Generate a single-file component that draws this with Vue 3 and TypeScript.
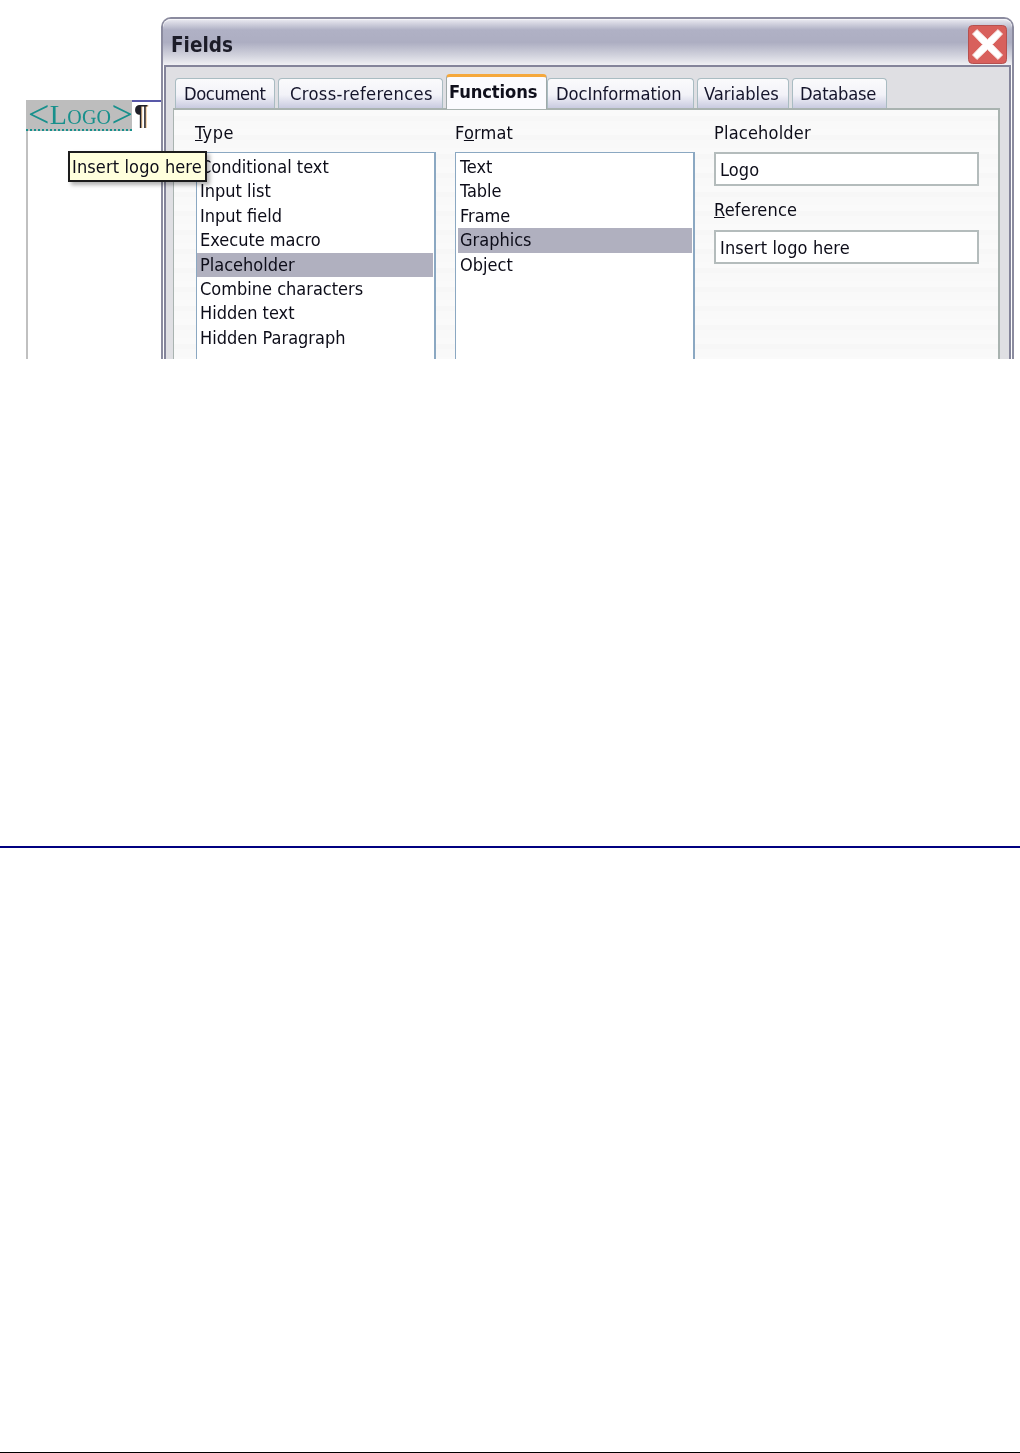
<script setup lang="ts">
interface Tab {
  name: string
  width: number
  pad: number
  spacing: number
}
const tabs: Tab[] = [
  { name: 'Document', width: 100, pad: 8, spacing: -0.4 },
  { name: 'Cross-references', width: 165, pad: 11, spacing: 0.35 },
  { name: 'Functions', width: 101, pad: 2, spacing: -0.1 },
  { name: 'DocInformation', width: 147, pad: 8, spacing: -0.05 },
  { name: 'Variables', width: 92, pad: 6, spacing: 0.02 },
  { name: 'Database', width: 95, pad: 7, spacing: -0.25 },
]
const types = ['Conditional text', 'Input list', 'Input field', 'Execute macro', 'Placeholder', 'Combine characters', 'Hidden text', 'Hidden Paragraph']
const formats = ['Text', 'Table', 'Frame', 'Graphics', 'Object']
</script>

<template>
  <div class="page">
    <div class="shot">
      <div class="doc">
        <div class="docline">
          <span class="logo"><span class="bracket">&lt;</span>Logo<span class="bracket">&gt;</span></span><span class="pil">¶</span>
        </div>
        <div class="docbody"></div>
      </div>

      <div class="dialog">
        <div class="titlebar">
          <span class="title">Fields</span>
          <svg class="close" width="39" height="39" viewBox="0 0 39 39">
            <rect x="0.5" y="0.5" width="38" height="38" rx="4" fill="#d8605c" stroke="#b5504f" />
            <path d="M4.5 9 L9 4.5 L19.5 14.5 L30 4.5 L34.5 9 L24.5 19.5 L34.5 30 L30 34.5 L19.5 24.5 L9 34.5 L4.5 30 L14.5 19.5 Z" fill="#fff" stroke="#f3d9d6" stroke-width="1" />
          </svg>
        </div>
        <div class="frame">
          <div class="tabs">
            <div
              v-for="t in tabs"
              :key="t.name"
              class="tab"
              :class="{ active: t.name === 'Functions' }"
              :style="{ width: t.width + 'px', paddingLeft: t.pad + 'px', letterSpacing: t.spacing + 'px' }"
            >{{ t.name }}</div>
          </div>
          <div class="panel">
            <div class="col">
              <div class="label first"><u>T</u>ype</div>
              <div class="list">
                <div v-for="t in types" :key="t" class="row" :class="{ sel: t === 'Placeholder' }">{{ t }}</div>
              </div>
            </div>
            <div class="col">
              <div class="label">F<u>o</u>rmat</div>
              <div class="list inset">
                <div v-for="f in formats" :key="f" class="row" :class="{ sel: f === 'Graphics' }">{{ f }}</div>
              </div>
            </div>
            <div class="col">
              <div class="label">Placeholder</div>
              <div class="input">Logo</div>
              <div class="label second"><u>R</u>eference</div>
              <div class="input">Insert logo here</div>
            </div>
          </div>
        </div>
      </div>

      <div class="tooltip">Insert logo here</div>
    </div>
    <div class="rule-blue"></div>
    <div class="rule-black"></div>
  </div>
</template>

<style scoped>
.page {
  height: 1453px;
  background: #fff;
  overflow: hidden;
  font-family: "DejaVu Sans Condensed", "DejaVu Sans", sans-serif;
  color: #0c0c18;
}
.shot {
  position: relative;
  height: 359px;
  overflow: hidden;
}
.doc {
  position: absolute;
  left: 26px;
  top: 100px;
  width: 135px;
  height: 270px;
  display: flex;
  flex-direction: column;
  filter: blur(0.35px);
}
.docline {
  display: flex;
  height: 31px;
  flex: none;
  background: linear-gradient(#5858a8, #5858a8) 106px 0 / 29px 2px no-repeat;
}
.logo {
  width: 106px;
  height: 31px;
  padding-left: 2px;
  box-sizing: border-box;
  background: #bdbdbd;
  color: #17908c;
  font-family: "Liberation Serif", serif;
  font-variant: small-caps;
  font-size: 28px;
  line-height: 29px;
  white-space: nowrap;
  border-bottom: 2px dotted #17908c;
  letter-spacing: 0.3px;
}
.bracket {
  font-size: 38px;
  line-height: 0;
  vertical-align: -3px;
}
.pil {
  margin-left: 2px;
  font-family: "Liberation Sans", sans-serif;
  font-size: 27px;
  line-height: 31px;
  color: #202028;
  text-shadow: 1px 0 0 rgba(230, 140, 40, 0.5);
}
.docbody {
  flex: 1;
  border-left: 2px solid #c0c0c0;
}
.dialog {
  position: absolute;
  left: 161px;
  top: 17px;
  width: 853px;
  height: 370px;
  box-sizing: border-box;
  border: 2px solid #8b8b9f;
  border-bottom: 0;
  border-radius: 10px 10px 0 0;
  background: #fff;
  display: flex;
  flex-direction: column;
  filter: blur(0.35px);
}
.titlebar {
  height: 46px;
  flex: none;
  display: flex;
  align-items: center;
  justify-content: space-between;
  box-sizing: border-box;
  padding: 5px 5px 0 8px;
  border-top: 1px solid #f4f4f8;
  border-radius: 8px 8px 0 0;
  background: linear-gradient(#e6e6ee 0, #b0b1c5 22%, #adaec2 50%, #d3d4de 80%, #f0f0f4 100%);
}
.title {
  font-size: 20.5px;
  font-weight: 700;
  color: #1c1c28;
  margin-top: -1px;
}
.close {
  display: block;
  margin-top: -1px;
}
.frame {
  flex: 1;
  margin: 0 1px;
  border: 2px solid #84849a;
  border-bottom: 0;
  background: #dfdfe3;
  padding: 9px 9px 0 7px;
  display: flex;
  flex-direction: column;
}
.tabs {
  display: flex;
  gap: 3px;
  height: 32px;
  align-items: flex-end;
  padding-left: 2px;
}
.tab {
  height: 30px;
  flex: none;
  box-sizing: border-box;
  padding-top: 3px;
  font-size: 18.2px;
  line-height: 24px;
  white-space: nowrap;
  color: #14142a;
  border: 1px solid #a9bcc2;
  border-bottom: 0;
  border-radius: 4px 4px 0 0;
  background: linear-gradient(#fafafc, #f2f2f8 55%, #c9cbe0);
}
.tab.active {
  height: 35px;
  margin: 0 -3px -1px 0;
  position: relative;
  z-index: 1;
  font-weight: 700;
  color: #10101c;
  background: #fbfbfe;
  border-color: #9fa9a9;
  border-top: 3px solid #f5a83c;
}
.panel {
  flex: 1;
  border: 1px solid #a9b3b0;
  border-width: 2px 2px 0 1px;
  padding: 11px 0 0 22px;
  display: grid;
  grid-template-columns: 240px 240px 265px;
  column-gap: 19px;
  background: repeating-linear-gradient(#fafafa 0 6px, #f7f7f7 6px 11px, #f9f9f9 11px 19px);
}
.col {
  display: flex;
  flex-direction: column;
}
.label {
  height: 31px;
  font-size: 18px;
  line-height: 24px;
  letter-spacing: 0.2px;
}
.label.first {
  margin-left: -1px;
  letter-spacing: 0.5px;
}
.label.second {
  margin-top: 12px;
  height: 32px;
}
.list {
  height: 300px;
  box-sizing: border-box;
  border: 1px solid #8ba8c2;
  border-width: 1px 2px 0 1px;
  background: #fff;
  padding: 2px 1px 0 0;
}
.list.inset {
  padding-left: 2px;
}
.row {
  height: 24.4px;
  padding-left: 3px;
  font-size: 18px;
  line-height: 24.4px;
  white-space: nowrap;
}
.list.inset .row {
  padding-left: 2px;
}
.row.sel {
  background: #b0b0bf;
}
.input {
  height: 34px;
  box-sizing: border-box;
  border: 2px solid #b4bcbc;
  background: #fff;
  padding-left: 4px;
  font-size: 18px;
  line-height: 31px;
  letter-spacing: 0.13px;
}
.tooltip {
  position: absolute;
  left: 68px;
  top: 151px;
  width: 139px;
  height: 31px;
  box-sizing: border-box;
  border: 2px solid #1c1c1c;
  background: #ffffdc;
  padding-left: 2px;
  font-size: 18px;
  line-height: 27px;
  letter-spacing: 0.13px;
  white-space: nowrap;
  box-shadow: 3px 3px 4px rgba(0, 0, 0, 0.3);
  filter: blur(0.35px);
}
.rule-blue {
  height: 2px;
  background: #000080;
  margin-top: 487px;
}
.rule-black {
  height: 1px;
  background: #000;
  margin-top: 604px;
}
</style>
